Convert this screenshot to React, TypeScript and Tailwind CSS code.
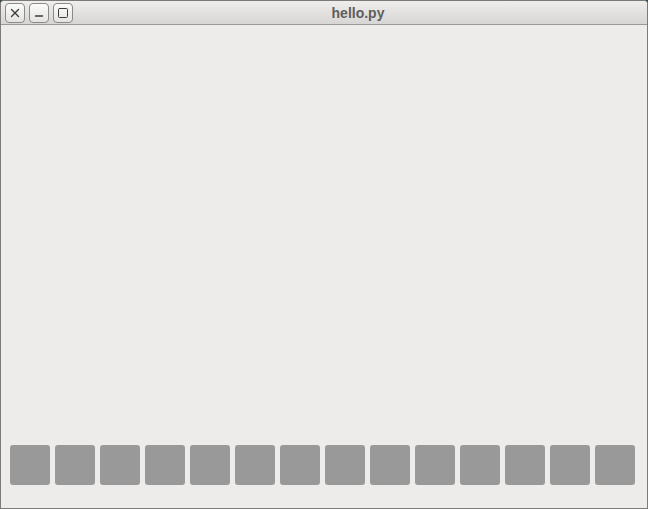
import { X, Minus, Square } from 'lucide-react';

const TILES = Array.from({ length: 14 }, (_, i) => i);

function TitleButton({ children }: { children: React.ReactNode }) {
  return (
    <div className="w-[20px] h-[20px] rounded-[4px] border border-[#8a8a88] bg-gradient-to-b from-[#fbfbfa] to-[#e4e3e1] flex items-center justify-center text-[#3c3c3c]">
      {children}
    </div>
  );
}

export default function App() {
  return (
    <div className="w-[648px] h-[509px] bg-[#3a4a52] font-['Liberation_Sans',sans-serif]">
      <div className="w-full h-full flex flex-col rounded-tl-[4px] rounded-tr-[4px] border border-[#7c7b79] bg-[#edecea] overflow-hidden">
        <div className="h-[24px] shrink-0 relative flex items-center px-[4px] gap-[4px] bg-gradient-to-b from-[#efeeec] to-[#d7d6d4] border-b border-[#9a9997]">
          <TitleButton>
            <X className="w-[14px] h-[14px]" strokeWidth={2.4} />
          </TitleButton>
          <TitleButton>
            <Minus className="w-[12px] h-[12px] translate-y-[3px]" strokeWidth={3} />
          </TitleButton>
          <TitleButton>
            <Square className="w-[12px] h-[12px]" strokeWidth={2} />
          </TitleButton>
          <div className="absolute inset-0 pl-[68px] pt-[1px] flex items-center justify-center pointer-events-none">
            <span className="text-[14px] font-bold text-[#5e5e5c]">hello.py</span>
          </div>
        </div>
        <div className="flex-1 flex flex-col justify-end px-[9px] pb-[23px]">
          <div className="flex gap-[5px]">
            {TILES.map((i) => (
              <div key={i} className="w-[40px] h-[40px] rounded-[3px] bg-[#999999]" />
            ))}
          </div>
        </div>
      </div>
    </div>
  );
}
